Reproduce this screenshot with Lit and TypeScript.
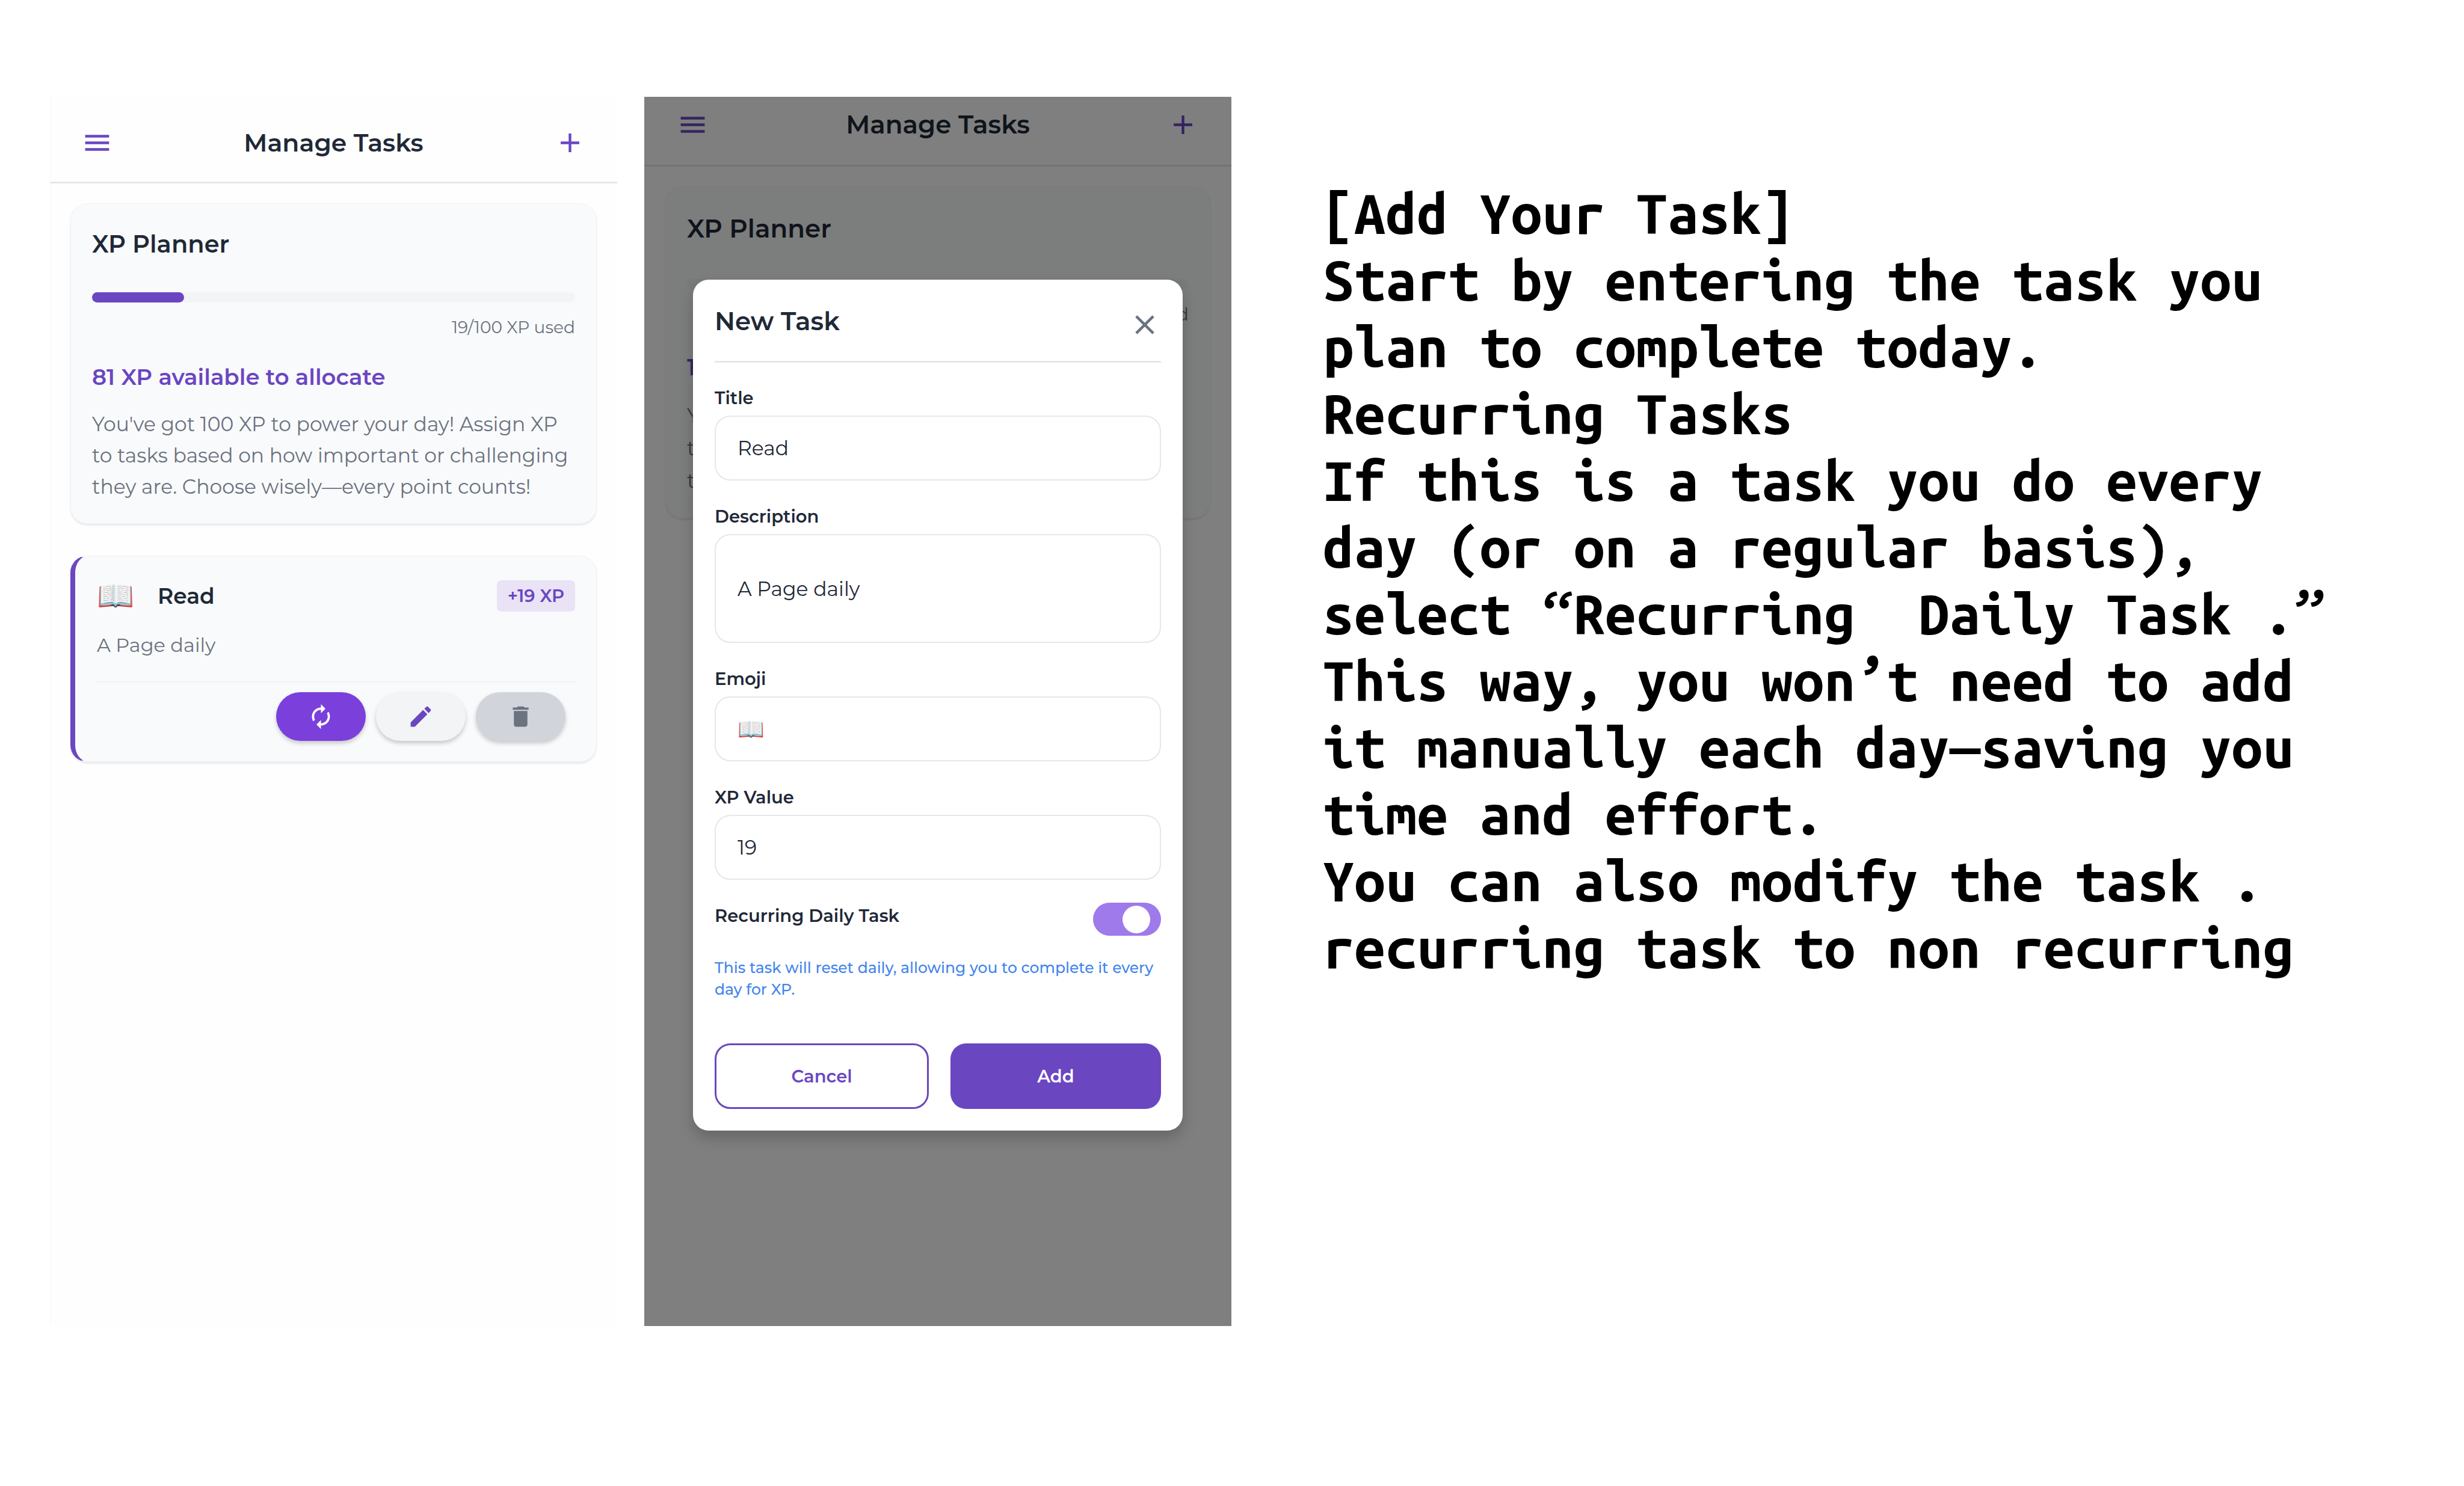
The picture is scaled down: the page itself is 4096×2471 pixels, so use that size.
import { LitElement, html, css, svg } from "lit";
import { customElement, property, state } from "lit/decorators.js";

const icons = {
  menu: svg`<path d="M3 18h18v-2H3v2zm0-5h18v-2H3v2zm0-7v2h18V6H3z"/>`,
  add: svg`<path d="M19 13h-6v6h-2v-6H5v-2h6V5h2v6h6v2z"/>`,
  close: svg`<path d="M19 6.41L17.59 5 12 10.59 6.41 5 5 6.41 10.59 12 5 17.59 6.41 19 12 13.41 17.59 19 19 17.59 13.41 12z"/>`,
  renew: svg`<path d="M12 6v3l4-4-4-4v3c-4.42 0-8 3.58-8 8 0 1.57.46 3.03 1.24 4.26L6.7 14.8c-.45-.83-.7-1.79-.7-2.8 0-3.31 2.69-6 6-6zm6.76 1.74L17.3 9.2c.44.84.7 1.79.7 2.8 0 3.31-2.69 6-6 6v-3l-4 4 4 4v-3c4.42 0 8-3.58 8-8 0-1.57-.46-3.03-1.24-4.26z"/>`,
  edit: svg`<path d="M3 17.25V21h3.75L17.81 9.94l-3.75-3.75L3 17.25zM20.71 7.04c.39-.39.39-1.02 0-1.41l-2.34-2.34c-.39-.39-1.02-.39-1.41 0l-1.83 1.83 3.75 3.75 1.83-1.83z"/>`,
  trash: svg`<path d="M6 19c0 1.1.9 2 2 2h8c1.1 0 2-.9 2-2V7H6v12zM19 4h-3.5l-1-1h-5l-1 1H5v2h14V4z"/>`,
};

const icon = (name: keyof typeof icons) =>
  html`<svg viewBox="0 0 24 24" fill="currentColor" aria-hidden="true">${icons[name]}</svg>`;

const base = css`
  * {
    box-sizing: border-box;
    margin: 0;
  }
  button,
  input,
  textarea {
    font: inherit;
    color: inherit;
    background: none;
    border: 0;
    padding: 0;
  }
  svg {
    display: block;
  }
`;

@customElement("app-bar")
class AppBar extends LitElement {
  static styles = [
    base,
    css`
      :host {
        display: block;
      }
      .bar {
        display: flex;
        align-items: center;
        justify-content: space-between;
        padding: 50px 52px 38px;
        border-bottom: 3px solid #e5e7eb;
      }
      :host([compact]) .bar {
        padding: 20px 54px 40px;
      }
      .action {
        color: #6b46c1;
      }
      .action svg {
        width: 53px;
        height: 53px;
      }
      .title {
        font-size: 41px;
        line-height: 53px;
        font-weight: 600;
      }
      :host([compact]) .title {
        font-size: 42px;
      }
    `,
  ];

  render() {
    return html`<header class="bar">
      <button class="action" aria-label="Menu">${icon("menu")}</button>
      <h1 class="title">Manage Tasks</h1>
      <button class="action" aria-label="Add task">${icon("add")}</button>
    </header>`;
  }
}

@customElement("xp-planner")
class XpPlanner extends LitElement {
  @property({ type: Number }) used = 0;
  @property({ type: Number }) total = 100;

  static styles = [
    base,
    css`
      :host {
        display: block;
      }
      .card {
        padding: 35px;
        background: #f9fafb;
        border: 1px solid #f1f2f3;
        border-radius: 28px;
        box-shadow: 0 3px 3px rgba(0, 0, 0, 0.08);
      }
      .heading {
        font-size: 40px;
        line-height: 64px;
        font-weight: 600;
      }
      .track {
        height: 17px;
        margin-top: 48px;
        border-radius: 9px;
        background: #f3f4f6;
      }
      .fill {
        height: 100%;
        border-radius: 9px;
        background: #6b46c1;
      }
      .used {
        margin-top: 23px;
        font-size: 28px;
        line-height: 36px;
        text-align: right;
        color: #6b7280;
      }
      .left {
        margin-top: 41px;
        font-size: 37px;
        line-height: 48px;
        font-weight: 600;
        color: #6b46c1;
      }
      .note {
        margin-top: 28px;
        font-size: 33px;
        line-height: 52px;
        color: #6b7280;
      }
      :host([large]) .heading {
        font-size: 42px;
        line-height: 68px;
      }
      :host([large]) .track {
        margin-top: 50px;
      }
      :host([large]) .used {
        font-size: 29px;
        line-height: 38px;
      }
      :host([large]) .left {
        margin-top: 44px;
        font-size: 38px;
        line-height: 50px;
      }
      :host([large]) .note {
        font-size: 34px;
        line-height: 54px;
      }
    `,
  ];

  render() {
    return html`<section class="card">
      <h2 class="heading">XP Planner</h2>
      <div class="track">
        <div class="fill" style="width:${(this.used / this.total) * 100}%"></div>
      </div>
      <p class="used">${this.used}/${this.total} XP used</p>
      <p class="left">${this.total - this.used} XP available to allocate</p>
      <p class="note">
        You've got 100 XP to power your day! Assign XP to tasks based on how
        important or challenging they are. Choose wisely—every point counts!
      </p>
    </section>`;
  }
}

@customElement("task-card")
class TaskCard extends LitElement {
  @property() name = "";
  @property() emoji = "";
  @property() description = "";
  @property({ type: Number }) xp = 0;

  static styles = [
    base,
    css`
      :host {
        display: block;
      }
      .card {
        padding: 34px 35px 34px 36px;
        background: #f9fafb;
        border: 1px solid #f1f2f3;
        border-left: 8px solid #6b46c1;
        border-radius: 28px;
        box-shadow: 0 3px 3px rgba(0, 0, 0, 0.08);
      }
      .head {
        display: flex;
        align-items: center;
        height: 64px;
      }
      .emoji {
        width: 101px;
        font-size: 50px;
        line-height: 64px;
      }
      .name {
        flex: 1;
        font-size: 36px;
        line-height: 64px;
        font-weight: 600;
      }
      .badge {
        padding: 0 18px;
        border-radius: 8px;
        background: #e9e3f5;
        color: #6b46c1;
        font-size: 29px;
        line-height: 52px;
        font-weight: 600;
      }
      .desc {
        margin-top: 26px;
        font-size: 32px;
        line-height: 48px;
        color: #6b7280;
      }
      .actions {
        display: flex;
        justify-content: flex-end;
        gap: 17px;
        margin-top: 35px;
        padding: 16px 16px 0 0;
        border-top: 3px solid #f3f4f6;
      }
      .action {
        display: grid;
        place-items: center;
        width: 149px;
        height: 81px;
        border-radius: 41px;
        box-shadow: 0 4px 7px rgba(0, 0, 0, 0.2);
      }
      .action svg {
        width: 45px;
        height: 45px;
      }
      .repeat {
        background: #7b3fdb;
        color: #fff;
      }
      .edit {
        background: #f3f4f6;
        color: #6b46c1;
      }
      .delete {
        background: #d1d5db;
        color: #6b7280;
      }
    `,
  ];

  render() {
    return html`<article class="card">
      <div class="head">
        <span class="emoji">${this.emoji}</span>
        <h2 class="name">${this.name}</h2>
        <span class="badge">+${this.xp} XP</span>
      </div>
      <p class="desc">${this.description}</p>
      <div class="actions">
        <button class="action repeat" aria-label="Recurring">${icon("renew")}</button>
        <button class="action edit" aria-label="Edit">${icon("edit")}</button>
        <button class="action delete" aria-label="Delete">${icon("trash")}</button>
      </div>
    </article>`;
  }
}

@customElement("task-form")
class TaskForm extends LitElement {
  @state() private recurring = true;

  static styles = [
    base,
    css`
      :host {
        display: block;
      }
      .dialog {
        padding: 36px;
        border-radius: 26px;
        background: #fff;
        box-shadow: 0 12px 24px rgba(0, 0, 0, 0.2);
      }
      .head {
        display: flex;
        align-items: flex-end;
        justify-content: space-between;
        padding-bottom: 33px;
        border-bottom: 3px solid #e5e7eb;
      }
      .heading {
        font-size: 42px;
        line-height: 66px;
        font-weight: 600;
      }
      .close {
        color: #6b7280;
      }
      .close svg {
        width: 54px;
        height: 54px;
      }
      .fields {
        display: grid;
        gap: 38px;
        margin-top: 37px;
      }
      .field {
        display: grid;
        gap: 7px;
      }
      .label {
        font-size: 29px;
        line-height: 44px;
        font-weight: 600;
      }
      .input {
        display: block;
        width: 100%;
        height: 108px;
        padding: 0 36px;
        border: 2px solid #e5e7eb;
        border-radius: 26px;
        font-size: 33px;
        line-height: 44px;
        resize: none;
        outline: none;
      }
      .area {
        height: 181px;
        padding: 67px 36px;
        overflow: hidden;
      }
      .glyph {
        font-size: 36px;
      }
      .toggle-row {
        display: flex;
        align-items: flex-start;
        justify-content: space-between;
      }
      .toggle {
        appearance: none;
        display: flex;
        align-items: center;
        width: 113px;
        height: 55px;
        padding: 0 18px;
        border-radius: 28px;
        background: #d1d5db;
      }
      .toggle::before {
        content: "";
        width: 46px;
        height: 46px;
        border-radius: 23px;
        background: #fff;
      }
      .toggle:checked {
        justify-content: flex-end;
        background: #9f7aea;
      }
      .hint {
        margin-top: 35px;
        font-size: 25px;
        line-height: 36px;
        font-weight: 500;
        color: #4285eb;
      }
      .buttons {
        display: flex;
        gap: 36px;
        margin-top: 72px;
      }
      .button {
        flex: 1;
        height: 109px;
        border-radius: 26px;
        font-size: 29px;
        font-weight: 600;
      }
      .cancel {
        border: 3px solid #6b46c1;
        color: #6b46c1;
      }
      .submit {
        background: #6b46c1;
        color: #fff;
      }
    `,
  ];

  render() {
    return html`<form class="dialog" @submit=${(e: Event) => e.preventDefault()}>
      <div class="head">
        <h2 class="heading">New Task</h2>
        <button class="close" type="button" aria-label="Close">${icon("close")}</button>
      </div>
      <div class="fields">
        <div class="field">
          <label class="label" for="title">Title</label>
          <input class="input" id="title" type="text" .value=${"Read"} />
        </div>
        <div class="field">
          <label class="label" for="description">Description</label>
          <textarea class="input area" id="description" rows="1" .value=${"A Page daily"}></textarea>
        </div>
        <div class="field">
          <label class="label" for="emoji">Emoji</label>
          <input class="input glyph" id="emoji" type="text" .value=${"📖"} />
        </div>
        <div class="field">
          <label class="label" for="xp">XP Value</label>
          <input class="input" id="xp" type="text" inputmode="numeric" .value=${"19"} />
        </div>
        <div class="toggle-row">
          <label class="label" for="recurring">Recurring Daily Task</label>
          <input
            class="toggle"
            id="recurring"
            type="checkbox"
            role="switch"
            .checked=${this.recurring}
            @change=${(e: Event) => (this.recurring = (e.target as HTMLInputElement).checked)}
          />
        </div>
      </div>
      <p class="hint">
        This task will reset daily, allowing you to complete it every day for XP.
      </p>
      <div class="buttons">
        <button class="button cancel" type="button">Cancel</button>
        <button class="button submit" type="submit">Add</button>
      </div>
    </form>`;
  }
}

@customElement("app-root")
class AppRoot extends LitElement {
  static styles = [
    base,
    css`
      :host {
        display: block;
        background: #fff;
        color: #1f2937;
        font-family: Montserrat, Inter, "Open Sans", sans-serif;
      }
      .page {
        display: grid;
        grid-template-columns: 943fr 976fr 1921fr;
        gap: 45px;
        min-height: 100vh;
        padding: 161px 83px 266px;
      }
      .screen {
        min-width: 0;
      }
      .tasks {
        background: linear-gradient(90deg, #f9f9f9 1px, #fefefe 1px);
      }
      .stack {
        display: grid;
        gap: 53px;
        padding: 33px 34px;
      }
      .adding {
        position: relative;
        background: #fff;
      }
      .behind {
        padding: 33px 35px;
      }
      .overlay {
        position: absolute;
        inset: 0;
        padding: 304px 81px 0;
        background: rgba(0, 0, 0, 0.5);
      }
      .guide {
        min-width: 0;
        padding: 141px 94px 0 107px;
        color: #000;
        font-family: "Ubuntu Sans Mono", "Ubuntu Mono", "DejaVu Sans Mono", monospace;
        font-size: 93px;
        line-height: 111px;
        font-weight: 700;
      }
      .guide-text {
        font: inherit;
        white-space: pre-wrap;
      }
    `,
  ];

  private guide = [
    "Start by entering the task you plan to complete today.",
    "Recurring Tasks",
    "If this is a task you do every day (or on a regular basis), select “Recurring  Daily Task .”",
    "This way, you won’t need to add it manually each day—saving you time and effort.",
    "You can also modify the task .",
    "recurring task to non recurring",
  ];

  render() {
    return html`<main class="page">
      <section class="screen tasks">
        <app-bar></app-bar>
        <div class="stack">
          <xp-planner used="19"></xp-planner>
          <task-card name="Read" emoji="📖" description="A Page daily" xp="19"></task-card>
        </div>
      </section>
      <section class="screen adding">
        <app-bar compact inert></app-bar>
        <div class="behind"><xp-planner large used="0" inert></xp-planner></div>
        <div class="overlay"><task-form></task-form></div>
      </section>
      <section class="guide">
        <h2 class="guide-text">[Add Your Task]</h2>
        ${this.guide.map((line) => html`<p class="guide-text">${line}</p>`)}
      </section>
    </main>`;
  }
}
